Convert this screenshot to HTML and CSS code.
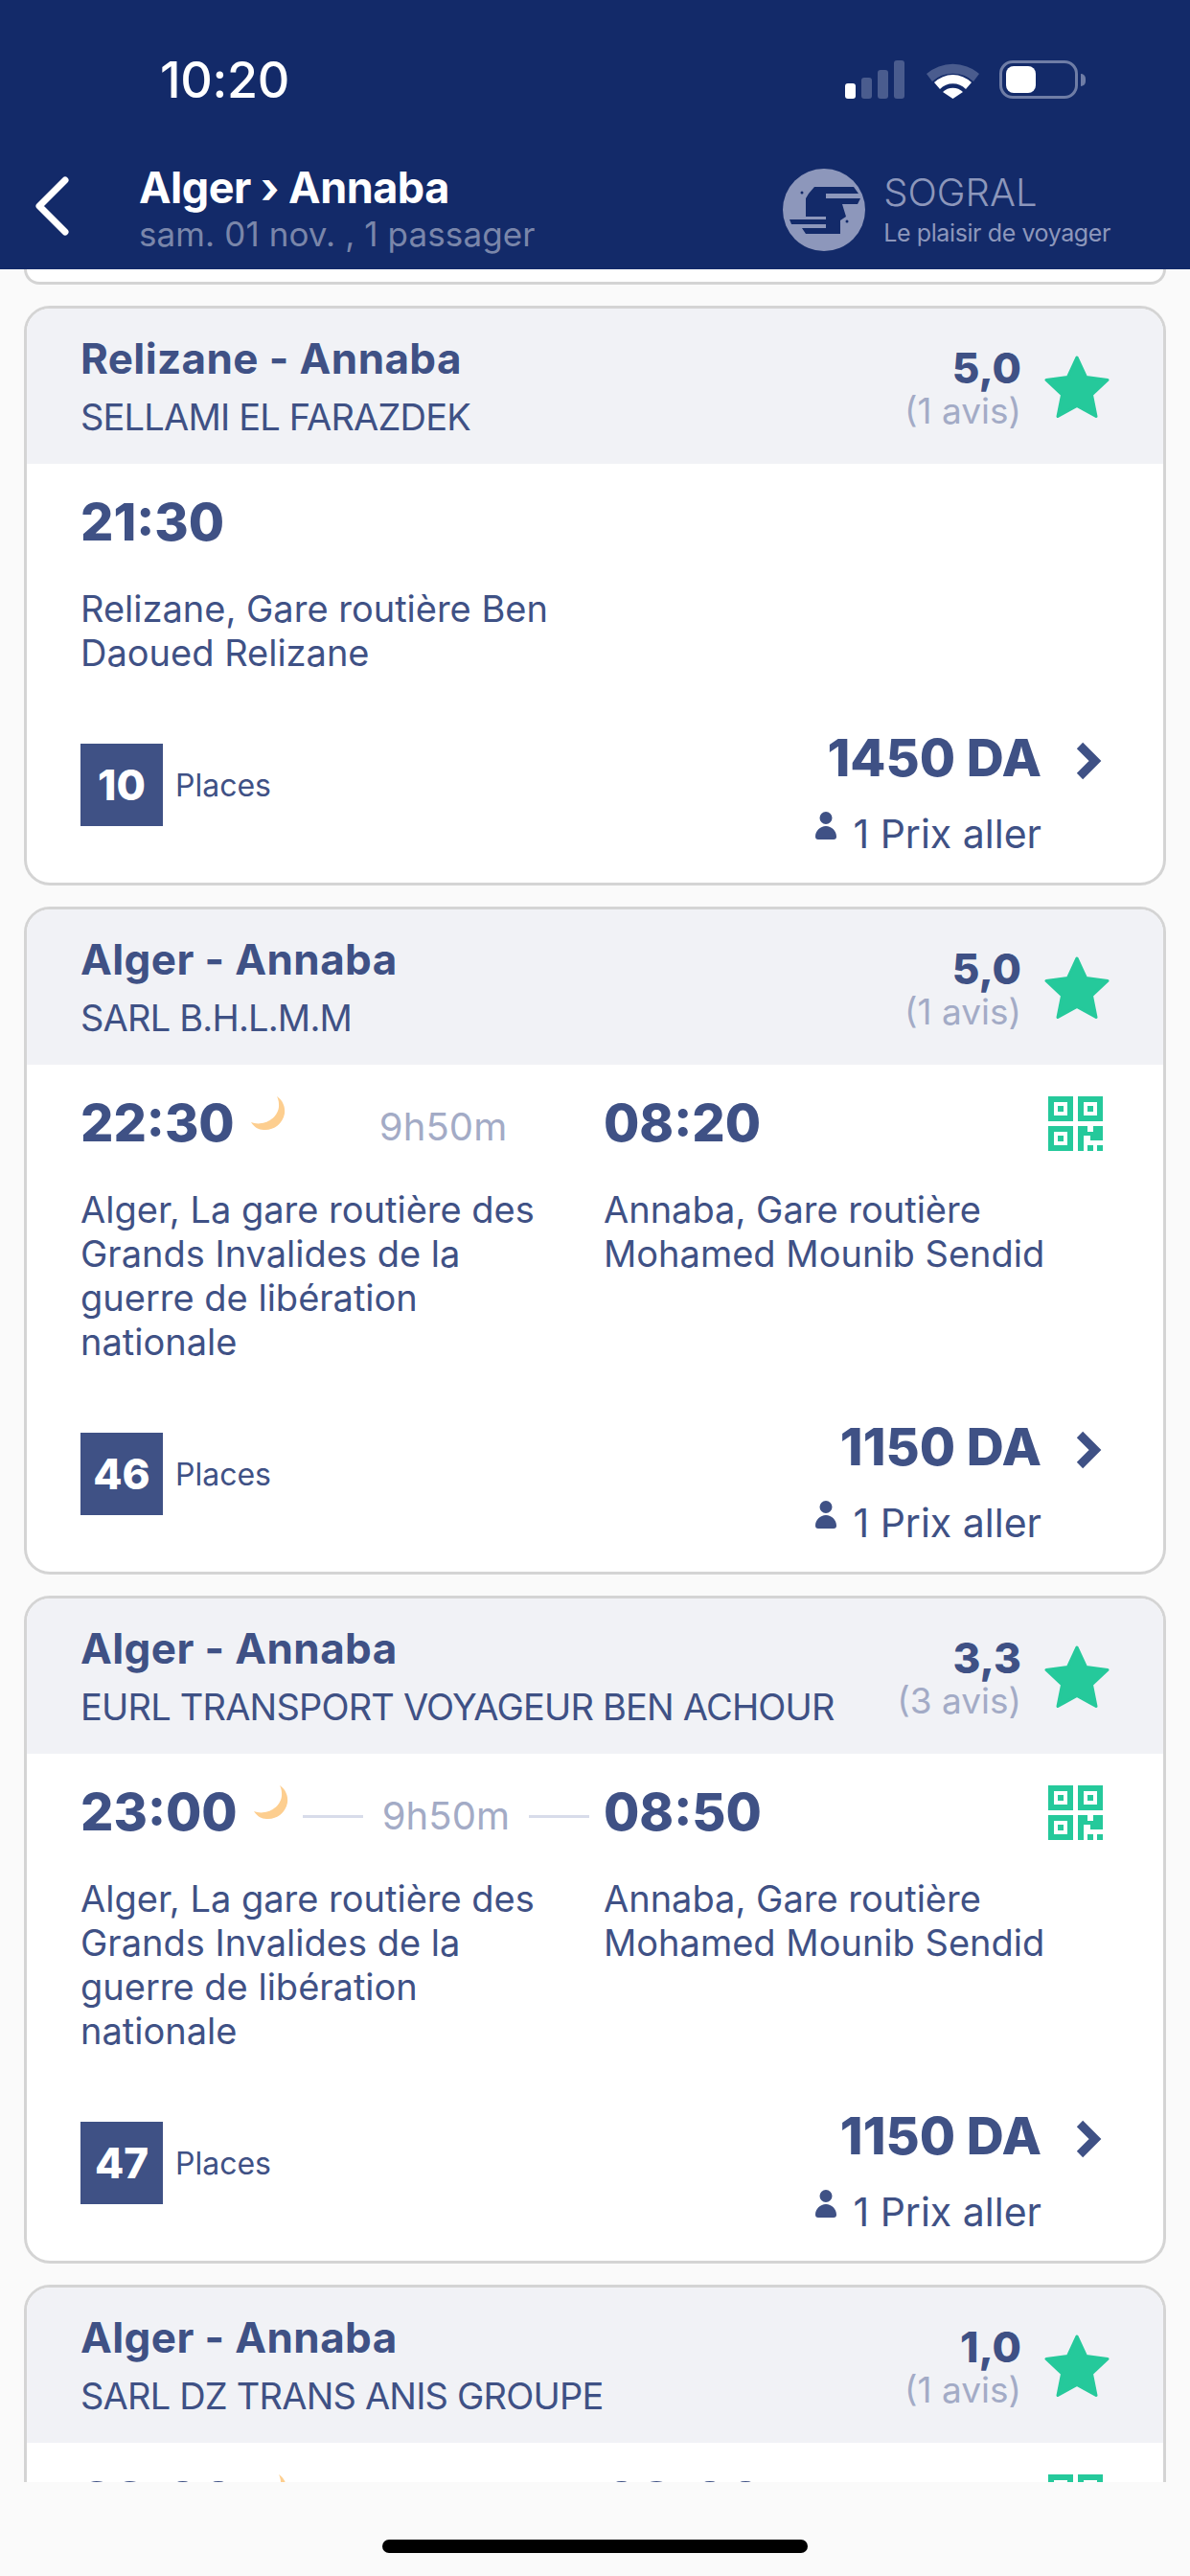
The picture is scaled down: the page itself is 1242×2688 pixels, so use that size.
FILE: index.html
```html
<!DOCTYPE html>
<html lang="fr">

<head>
    <meta charset="UTF-8">
    <meta name="viewport" content="width=device-width, initial-scale=1.0">
    <title>Alger - Annaba</title>
    <link rel="stylesheet" href="styles.css">
</head>

<body>
    <header class="topBar">
        <div class="statusBar">
            <span class="clock">10:20</span>
            <div class="statusIcons">
                <svg class="signalIcon" width="62" height="40" viewBox="0 0 62 40">
                    <rect x="0" y="24" width="11" height="16" rx="3" fill="#fff" />
                    <rect x="17" y="18" width="11" height="22" rx="3" fill="#4a5c8e" />
                    <rect x="34" y="10" width="11" height="30" rx="3" fill="#4a5c8e" />
                    <rect x="51" y="0" width="11" height="40" rx="3" fill="#4a5c8e" />
                </svg>
                <svg class="wifiIcon" width="55" height="38" viewBox="0 0 55 38">
                    <path d="M0 12 A42 42 0 0 1 55 12 L49 20 A32 32 0 0 0 6 20 Z" fill="#4a5c8e" />
                    <path d="M8 21 A28 28 0 0 1 47 21 L41 28 A19 19 0 0 0 14 28 Z" fill="#fff" />
                    <path d="M17 31 A15 15 0 0 1 38 31 L27.5 38 Z" fill="#fff" />
                </svg>
                <div class="battery">
                    <div class="batteryFill"></div>
                </div>
                <div class="batteryNub"></div>
            </div>
        </div>
        <div class="navBar">
            <svg class="backIcon" width="36" height="62" viewBox="0 0 36 62">
                <path d="M32 4 L5 31 L32 58" fill="none" stroke="#fff" stroke-width="7" stroke-linecap="round" stroke-linejoin="round" />
            </svg>
            <div class="navTitles">
                <div class="navTitle">Alger › Annaba</div>
                <div class="navSub">sam. 01 nov. , 1 passager</div>
            </div>
            <div class="logo">
                <svg width="86" height="86" viewBox="0 0 86 86">
                    <circle cx="43" cy="43" r="43" fill="#8d97bb" />
                    <path d="M33 19 H74 L79 26 H45 V31 H81 L78 37 H62 L66 50 L60 54 V68 H24 L20 62 H45 V50 H24 V31 L27 26 Z" fill="#132a69" />
                    <path d="M7 53 H45 V58 H9 Z" fill="#132a69" />
                    <circle cx="20" cy="25" r="1.5" fill="#132a69" />
                    <circle cx="67" cy="55" r="1.5" fill="#132a69" />
                </svg>
                <div class="logoText">
                    <div class="logoName">SOGRAL</div>
                    <div class="logoTag">Le plaisir de voyager</div>
                </div>
            </div>
        </div>
    </header>

    <main class="tripList">
        <div class="cardCut"></div>

        <article class="card">
            <div class="cardHead">
                <div>
                    <div class="lineName">Relizane - Annaba</div>
                    <div class="company">SELLAMI EL FARAZDEK</div>
                </div>
                <div class="rating">
                    <div>
                        <div class="score">5,0</div>
                        <div class="reviews">(1 avis)</div>
                    </div>
                    <svg class="starIcon" width="68" height="66" viewBox="0 0 68 66"><use href="#star" /></svg>
                </div>
            </div>
            <div class="cardBody">
                <div class="route">
                    <div class="timeRow">
                        <span class="time">21:30</span>
                    </div>
                    <div></div>
                    <div class="address">Relizane, Gare routière Ben<br>Daoued Relizane</div>
                </div>
                <div class="cardFoot">
                    <div class="seats"><span class="seatCount">10</span><span class="seatLabel">Places</span></div>
                    <div class="priceBlock">
                        <div class="price">1450 DA</div>
                        <div class="priceNote"><svg class="personIcon" width="22" height="29" viewBox="0 0 22 29"><use href="#person" /></svg>1 Prix aller</div>
                    </div>
                    <svg class="goIcon" width="28" height="40" viewBox="0 0 28 40"><use href="#go" /></svg>
                </div>
            </div>
        </article>

        <article class="card">
            <div class="cardHead">
                <div>
                    <div class="lineName">Alger - Annaba</div>
                    <div class="company">SARL B.H.L.M.M</div>
                </div>
                <div class="rating">
                    <div>
                        <div class="score">5,0</div>
                        <div class="reviews">(1 avis)</div>
                    </div>
                    <svg class="starIcon" width="68" height="66" viewBox="0 0 68 66"><use href="#star" /></svg>
                </div>
            </div>
            <div class="cardBody">
                <div class="route">
                    <div class="timeRow">
                        <span class="time">22:30</span>
                        <svg class="moonIcon" width="36" height="36" viewBox="0 0 36 36"><use href="#moon" /></svg>
                        <span class="rule ruleOff"></span>
                        <span class="duration">9h50m</span>
                        <span class="rule ruleOff"></span>
                    </div>
                    <div class="timeRow">
                        <span class="time">08:20</span>
                        <svg class="qrIcon" width="58" height="58" viewBox="0 0 58 58"><use href="#qr" /></svg>
                    </div>
                    <div class="address">Alger, La gare routière des<br>Grands Invalides de la<br>guerre de libération<br>nationale</div>
                    <div class="address">Annaba, Gare routière<br>Mohamed Mounib Sendid</div>
                </div>
                <div class="cardFoot">
                    <div class="seats"><span class="seatCount">46</span><span class="seatLabel">Places</span></div>
                    <div class="priceBlock">
                        <div class="price">1150 DA</div>
                        <div class="priceNote"><svg class="personIcon" width="22" height="29" viewBox="0 0 22 29"><use href="#person" /></svg>1 Prix aller</div>
                    </div>
                    <svg class="goIcon" width="28" height="40" viewBox="0 0 28 40"><use href="#go" /></svg>
                </div>
            </div>
        </article>

        <article class="card">
            <div class="cardHead">
                <div>
                    <div class="lineName">Alger - Annaba</div>
                    <div class="company">EURL TRANSPORT VOYAGEUR BEN ACHOUR</div>
                </div>
                <div class="rating">
                    <div>
                        <div class="score">3,3</div>
                        <div class="reviews">(3 avis)</div>
                    </div>
                    <svg class="starIcon" width="68" height="66" viewBox="0 0 68 66"><use href="#star" /></svg>
                </div>
            </div>
            <div class="cardBody">
                <div class="route">
                    <div class="timeRow">
                        <span class="time">23:00</span>
                        <svg class="moonIcon" width="36" height="36" viewBox="0 0 36 36"><use href="#moon" /></svg>
                        <span class="rule"></span>
                        <span class="duration">9h50m</span>
                        <span class="rule"></span>
                    </div>
                    <div class="timeRow">
                        <span class="time">08:50</span>
                        <svg class="qrIcon" width="58" height="58" viewBox="0 0 58 58"><use href="#qr" /></svg>
                    </div>
                    <div class="address">Alger, La gare routière des<br>Grands Invalides de la<br>guerre de libération<br>nationale</div>
                    <div class="address">Annaba, Gare routière<br>Mohamed Mounib Sendid</div>
                </div>
                <div class="cardFoot">
                    <div class="seats"><span class="seatCount">47</span><span class="seatLabel">Places</span></div>
                    <div class="priceBlock">
                        <div class="price">1150 DA</div>
                        <div class="priceNote"><svg class="personIcon" width="22" height="29" viewBox="0 0 22 29"><use href="#person" /></svg>1 Prix aller</div>
                    </div>
                    <svg class="goIcon" width="28" height="40" viewBox="0 0 28 40"><use href="#go" /></svg>
                </div>
            </div>
        </article>

        <article class="card">
            <div class="cardHead">
                <div>
                    <div class="lineName">Alger - Annaba</div>
                    <div class="company">SARL DZ TRANS ANIS GROUPE</div>
                </div>
                <div class="rating">
                    <div>
                        <div class="score">1,0</div>
                        <div class="reviews">(1 avis)</div>
                    </div>
                    <svg class="starIcon" width="68" height="66" viewBox="0 0 68 66"><use href="#star" /></svg>
                </div>
            </div>
            <div class="cardBody">
                <div class="route">
                    <div class="timeRow">
                        <span class="time">22:00</span>
                        <svg class="moonIcon" width="36" height="36" viewBox="0 0 36 36"><use href="#moon" /></svg>
                    </div>
                    <div class="timeRow">
                        <span class="time">08:00</span>
                        <svg class="qrIcon" width="58" height="58" viewBox="0 0 58 58"><use href="#qr" /></svg>
                    </div>
                </div>
            </div>
        </article>
    </main>

    <footer class="homeArea">
        <div class="homeBar"></div>
    </footer>

    <!-- shared icons -->
    <svg class="iconDefs" width="0" height="0">
        <defs>
            <path id="star" fill="#25c99b" stroke="#25c99b" stroke-width="3" stroke-linejoin="round" d="M34 2 L43.5 22.5 L66 25.5 L49.5 41 L54 63.5 L34 52.5 L14 63.5 L18.5 41 L2 25.5 L24.5 22.5 Z" />
            <path id="moon" fill="#fdce8f" d="M27 0 C33 4 36 11 35 18 C33 29 23 36 13 35 C8 35 3 32 0 27 C3 28 7 29 11 28 C21 27 30 18 29 8 C29 5 28 2 27 0 Z" />
            <path id="person" fill="#3f5185" d="M11 0 A6.5 6.5 0 1 1 11 13 A6.5 6.5 0 1 1 11 0 Z M3 29 C1 29 0 28 0 26 C0 20 5 15 11 15 C17 15 22 20 22 26 C22 28 21 29 19 29 Z" />
            <path id="go" fill="none" stroke="#3f5185" stroke-width="9" stroke-linejoin="miter" d="M4 4 L20 20 L4 36" />
            <g id="qr" fill="#25c99b">
                <path fill-rule="evenodd" d="M0 0H26V26H0Z M6 6V20H20V6Z M10 10H16V16H10Z" />
                <path fill-rule="evenodd" d="M31 0H57V26H31Z M37 6V20H51V6Z M41 10H47V16H41Z" />
                <path fill-rule="evenodd" d="M0 31H26V57H0Z M6 37V51H20V37Z M10 41H16V47H10Z" />
                <path d="M31 31H41V37H47V31H57V46H44V41H37V57H31Z M41 51H47V57H41Z M51 51H57V57H51Z" />
            </g>
        </defs>
    </svg>
</body>

</html>
```

FILE: styles.css
```css
* {
    box-sizing: border-box;
}

html,
body {
    margin: 0;
    height: 2688px;
    overflow: hidden;
}

body {
    display: flex;
    flex-direction: column;
    background-color: #fafafa;
    color: #3f5185;
    font-family: "Inter", "Liberation Sans", sans-serif;
}

/* top bar */
.topBar {
    height: 281px;
    flex: none;
    background-color: #132a69;
    color: #fff;
}

.statusBar {
    height: 146px;
    padding: 63px 109px 0 167px;
    display: flex;
    justify-content: space-between;
}

.clock {
    font-size: 52px;
    font-weight: 500;
    line-height: 42px;
    letter-spacing: -0.3px;
}

.statusIcons {
    display: flex;
    align-items: flex-start;
}

.signalIcon {
    margin-right: 23px;
}

.wifiIcon {
    margin: 2px 21px 0 0;
}

.battery {
    width: 82px;
    height: 40px;
    padding: 3px 4px;
    border: 3px solid #6f7da6;
    border-radius: 14px;
}

.batteryFill {
    width: 31px;
    height: 100%;
    background-color: #fff;
    border-radius: 8px;
}

.batteryNub {
    width: 5px;
    height: 13px;
    margin: 14px 0 0 3px;
    background-color: #6f7da6;
    border-radius: 0 5px 5px 0;
}

.navBar {
    display: flex;
    align-items: flex-start;
    padding-left: 36px;
}

.backIcon {
    margin-top: 38px;
}

.navTitles {
    margin-left: 73px;
    padding-top: 25px;
}

.navTitle {
    font-size: 45px;
    font-weight: 700;
    line-height: 50px;
    letter-spacing: -0.5px;
}

.navSub {
    font-size: 35px;
    line-height: 46px;
    letter-spacing: 0.1px;
    color: #7a86aa;
}

.logo {
    margin-left: auto;
    padding: 30px 83px 0 0;
    display: flex;
    gap: 19px;
    color: #8d97bb;
}

.logoName {
    font-size: 40px;
    font-weight: 300;
    line-height: 50px;
}

.logoTag {
    margin-top: 2px;
    font-size: 25px;
    line-height: 30px;
    letter-spacing: -0.4px;
}

/* trip cards */
.tripList {
    flex: 1;
    min-height: 0;
    overflow: hidden;
    padding: 0 25px;
    display: flex;
    flex-direction: column;
    gap: 22px;
}

.cardCut {
    height: 16px;
    flex: none;
    background-color: #fff;
    border: 3px solid #d4d4d4;
    border-top: 0;
    border-radius: 0 0 27px 27px;
}

.card {
    flex: none;
    background-color: #fff;
    border: 3px solid #d4d4d4;
    border-radius: 27px;
    overflow: hidden;
}

.cardHead {
    height: 162px;
    padding: 24px 56px 0 56px;
    display: flex;
    justify-content: space-between;
    background-color: #f1f2f6;
}

.lineName {
    font-size: 44px;
    font-weight: 700;
    line-height: 56px;
    letter-spacing: 0.4px;
}

.company {
    margin-top: 8px;
    font-size: 38px;
    line-height: 50px;
    letter-spacing: -0.8px;
}

.rating {
    display: flex;
    gap: 24px;
    padding-top: 2px;
    text-align: right;
}

.score {
    padding-top: 13px;
    font-size: 44px;
    font-weight: 800;
    line-height: 46px;
}

.reviews {
    margin-top: 3px;
    font-size: 37px;
    line-height: 38px;
    color: #a3abc6;
}

.starIcon {
    margin-top: 23px;
}

.cardBody {
    padding: 25px 0 59px 56px;
}

.route {
    display: grid;
    grid-template-columns: 546px 1fr;
}

.timeRow {
    height: 70px;
    display: flex;
    align-items: center;
}

.time {
    font-size: 54px;
    font-weight: 800;
}

.moonIcon {
    margin: -18px 15px 0 17px;
}

.rule {
    width: 63px;
    height: 3px;
    margin-top: 10px;
    background-color: #d8dcea;
}

.ruleOff {
    background-color: transparent;
}

.duration {
    margin: 10px 20px 0;
    font-size: 40px;
    line-height: 46px;
    letter-spacing: 0.1px;
    color: #a3abc6;
}

.qrIcon {
    margin: 4px 62px 0 auto;
}

.address {
    margin-top: 33px;
    font-size: 38px;
    line-height: 46px;
}

.cardFoot {
    height: 86px;
    margin-top: 72px;
    padding-right: 63px;
    display: flex;
    align-items: flex-start;
}

.seats {
    display: flex;
    align-items: center;
    gap: 13px;
    height: 86px;
}

.seatCount {
    width: 86px;
    height: 86px;
    background-color: #3f5185;
    color: #fff;
    font-size: 44px;
    font-weight: 800;
    line-height: 86px;
    text-align: center;
}

.seatLabel {
    font-size: 32px;
}

.priceBlock {
    margin-left: auto;
    margin-top: -16px;
    text-align: right;
}

.price {
    font-size: 54px;
    font-weight: 800;
    line-height: 62px;
}

.priceNote {
    margin-top: 25px;
    display: flex;
    justify-content: flex-end;
    font-size: 41px;
    line-height: 46px;
}

.personIcon {
    margin-right: 17px;
}

.goIcon {
    margin: -2px 0 0 36px;
}

.iconDefs {
    position: absolute;
}

/* home indicator */
.homeArea {
    height: 98px;
    flex: none;
    background-color: #fafafa;
    padding-top: 60px;
}

.homeBar {
    width: 444px;
    height: 14px;
    margin: 0 auto;
    background-color: #000;
    border-radius: 7px;
}
```
